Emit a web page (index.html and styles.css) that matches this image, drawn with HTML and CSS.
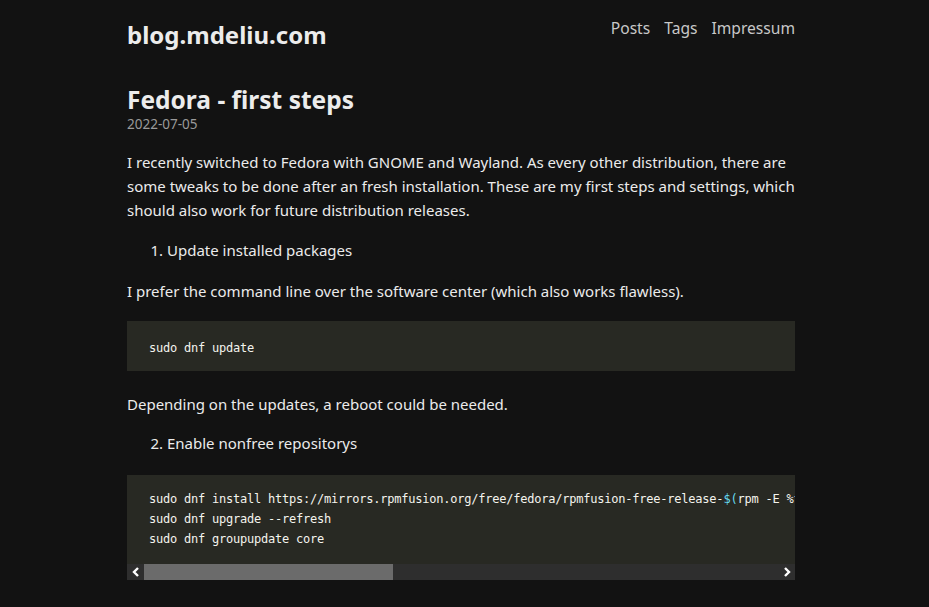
FILE: index.html
```html
<!DOCTYPE html>
<html lang="en">
<head>
<meta charset="utf-8">
<title>Fedora - first steps | blog.mdeliu.com</title>
<link rel="stylesheet" href="styles.css">
</head>
<body>
<div class="page">
  <header class="site-header">
    <a class="brand" href="#">blog.mdeliu.com</a>
    <nav class="nav">
      <a href="#">Posts</a>
      <a href="#">Tags</a>
      <a href="#">Impressum</a>
    </nav>
  </header>
  <main class="post">
    <h1 class="post-title">Fedora - first steps</h1>
    <div class="post-date">2022-07-05</div>
    <p>I recently switched to Fedora with GNOME and Wayland. As every other distribution, there are some tweaks to be done after an fresh installation. These are my first steps and settings, which should also work for future distribution releases.</p>
    <ol class="steps">
      <li>Update installed packages</li>
    </ol>
    <p>I prefer the command line over the software center (which also works flawless).</p>
    <div class="code"><pre><code>sudo dnf update</code></pre></div>
    <p>Depending on the updates, a reboot could be needed.</p>
    <ol class="steps" start="2">
      <li>Enable nonfree repositorys</li>
    </ol>
    <div class="code scrolling">
      <pre><code>sudo dnf install https://mirrors.rpmfusion.org/free/fedora/rpmfusion-free-release-<span class="var">$(</span>rpm -E %fedora<span class="var">)</span>.noarch.rpm https://mirrors.rpmfusion.org/nonfree/fedora/rpmfusion-nonfree-release-<span class="var">$(</span>rpm -E %fedora<span class="var">)</span>.noarch.rpm
sudo dnf upgrade --refresh
sudo dnf groupupdate core</code></pre>
      <div class="scrollbar">
        <span class="sb-btn"><svg width="16" height="16" viewBox="0 0 16 16"><path d="M10 4 L6 8 L10 12" fill="none" stroke="#fff" stroke-width="2.4"/></svg></span>
        <span class="sb-track"><span class="sb-thumb"></span></span>
        <span class="sb-btn"><svg width="16" height="16" viewBox="0 0 16 16"><path d="M6 4 L10 8 L6 12" fill="none" stroke="#fff" stroke-width="2.4"/></svg></span>
      </div>
    </div>
  </main>
</div>
</body>
</html>
```

FILE: styles.css
```css
html, body {
  margin: 0;
  padding: 0;
  background: #121212;
}
body {
  color: #ebebeb;
  font-family: "Noto Sans", "Open Sans", sans-serif;
  font-size: 15px;
  line-height: 24px;
  padding-right: 7px;
}
a {
  color: inherit;
  text-decoration: none;
}
.page {
  width: 668px;
  margin: 0 auto;
}
.site-header {
  display: flex;
  justify-content: space-between;
  align-items: flex-start;
  padding-top: 16px;
}
.brand {
  font-size: 24px;
  font-weight: 700;
  line-height: 36px;
  color: #ececec;
  margin-top: 1px;
}
.nav {
  display: flex;
  gap: 14px;
  font-size: 15.6px;
  line-height: 24px;
  color: #c8c8c8;
}
.post {
  padding-top: 32px;
}
.post-title {
  font-size: 24.5px;
  font-weight: 700;
  line-height: 30px;
  margin: 0;
  color: #ececec;
}
.post-date {
  color: #9a9a9a;
  font-size: 13.5px;
  line-height: 16px;
  margin: 1px 0 18px;
}
p {
  margin: 0 0 16px;
}
.code + p {
  margin-bottom: 15px;
}
.steps {
  margin: 0 0 17px;
  padding-left: 40px;
}
.code {
  background: #282923;
  margin: 18px 0 21px;
}
.steps + .code {
  margin-top: 20px;
}
.code pre {
  margin: 0;
  padding: 17px 22px 13px;
  font-family: "DejaVu Sans Mono", "Liberation Mono", monospace;
  font-size: 12px;
  letter-spacing: -0.22px;
  line-height: 20px;
  color: #f4f4ee;
  overflow: hidden;
  white-space: pre;
}
.code.scrolling pre {
  padding: 14px 22px 15px;
}
.var {
  color: #66d9ef;
}
.scrollbar {
  display: flex;
  height: 16px;
  background: #2e2e2e;
}
.sb-btn {
  width: 17px;
  height: 16px;
  display: flex;
  align-items: center;
  justify-content: center;
  background: #2e2e2e;
}
.sb-track {
  flex: 1;
  display: flex;
}
.sb-thumb {
  width: 249px;
  background: #6b6b6b;
}
```
